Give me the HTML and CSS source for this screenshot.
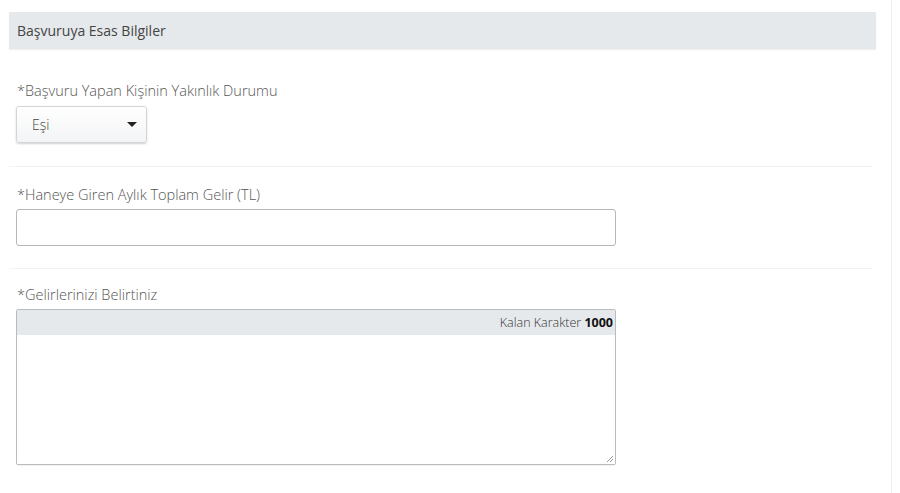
FILE: index.html
```html
<!DOCTYPE html>
<html lang="tr">
<head>
<meta charset="utf-8">
<link rel="stylesheet" href="styles.css">
</head>
<body>
<div class="page">
  <div class="panel">
    <div class="section-title">Başvuruya Esas Bilgiler</div>

    <div class="field">
      <label class="label">*Başvuru Yapan Kişinin Yakınlık Durumu</label>
      <div class="select">
        <span class="select-value">Eşi</span>
        <span class="caret"></span>
      </div>
    </div>

    <div class="divider"></div>

    <div class="field">
      <label class="label">*Haneye Giren Aylık Toplam Gelir (TL)</label>
      <div class="input"></div>
    </div>

    <div class="divider divider-second"></div>

    <div class="field">
      <label class="label">*Gelirlerinizi Belirtiniz</label>
      <div class="textarea">
        <div class="counter">Kalan Karakter <b>1000</b></div>
        <div class="textarea-body">
          <svg class="grip" width="9" height="9" viewBox="0 0 9 9"><path d="M8 2 L2 8 M8 5 L5 8" stroke="#999" stroke-width="1" fill="none"/></svg>
        </div>
      </div>
    </div>
  </div>
</div>
</body>
</html>
```

FILE: styles.css
```css
html, body {
  margin: 0;
  padding: 0;
  background: #fff;
}
body {
  font-family: "Open Sans", "Liberation Sans", sans-serif;
  color: #555;
}
.page {
  width: 892px;
  height: 493px;
  border-right: 1px solid #eceef0;
  box-sizing: border-box;
  padding: 12px 16px 0 9px;
}
.panel {
  width: 867px;
}
.section-title {
  height: 37px;
  background: #e6e9ec;
  box-shadow: 0 1px 1px rgba(0,0,0,0.06);
  box-sizing: border-box;
  padding-left: 8px;
  font-size: 14px;
  font-weight: 400;
  line-height: 37px;
  color: #444;
}
.field {
  padding-left: 7px;
}
.field:nth-child(2) {
  padding-top: 33px;
}
.label {
  display: block;
  font-size: 14.5px;
  font-weight: 300;
  color: #555;
  line-height: 18px;
  margin-left: 1px;
}
.select {
  margin-top: 6px;
  width: 131px;
  height: 37px;
  box-sizing: border-box;
  border: 1px solid #d3d6d9;
  border-radius: 3px;
  background: linear-gradient(#ffffff, #f3f4f5);
  box-shadow: 0 1px 2px rgba(0,0,0,0.18);
  display: flex;
  align-items: center;
  justify-content: space-between;
  padding: 0 9px 0 15px;
}
.select-value {
  font-size: 14px;
  color: #444;
  font-weight: 300;
}
.caret {
  width: 0;
  height: 0;
  border-left: 5px solid transparent;
  border-right: 5px solid transparent;
  border-top: 5px solid #222;
}
.divider {
  height: 1px;
  background: #f1f2f3;
  margin: 23px 4px 19px 0;
}
.divider-second {
  margin: 22px 4px 18px 0;
}
.field:last-child .label {
  margin-top: -1px;
}
.input {
  margin-top: 5px;
  width: 600px;
  height: 37px;
  box-sizing: border-box;
  border: 1px solid #b5b8bb;
  border-radius: 3px;
  background: #fff;
}
.textarea {
  margin-top: 5px;
  width: 600px;
  height: 156px;
  box-sizing: border-box;
  border: 1px solid #b9bcbf;
  border-radius: 2px;
  display: flex;
  flex-direction: column;
  box-shadow: 0 1px 1px rgba(0,0,0,0.06);
}
.counter {
  height: 25px;
  background: #e6e9ec;
  text-align: right;
  font-size: 12.5px;
  line-height: 25px;
  padding-right: 2px;
  color: #333;
  font-weight: 300;
}
.counter b {
  font-weight: 700;
  color: #111;
}
.textarea-body {
  flex: 1;
  position: relative;
  background: #fff;
}
.grip {
  position: absolute;
  right: 1px;
  bottom: 1px;
}
```
